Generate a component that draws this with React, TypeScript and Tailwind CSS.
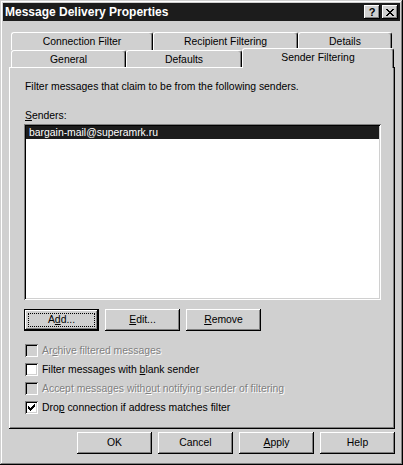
import React from "react";

const raised =
  "shadow-[inset_-1px_-1px_0_#000,inset_1px_1px_0_#fff,inset_-2px_-2px_0_#808080]";
const focused =
  "shadow-[inset_0_0_0_1px_#000,inset_-2px_-2px_0_#000,inset_2px_2px_0_#fff,inset_-3px_-3px_0_#808080]";

function Btn({ children, focus }: { children: React.ReactNode; focus?: boolean }) {
  return (
    <div
      className={`relative flex h-[22px] w-[75px] items-center justify-center bg-[#d0d0d0] text-black ${
        focus ? focused : raised
      }`}
    >
      {focus && <div className="absolute inset-[4px] border border-dotted border-black" />}
      <span className="leading-none">{children}</span>
    </div>
  );
}

function Tab({
  label,
  w,
  h,
  selected,
}: {
  label: string;
  w: string;
  h: string;
  selected?: boolean;
}) {
  return (
    <div
      className={`${w} ${h} flex shrink-0 justify-center rounded-t-[3px] border-l border-t border-r border-l-white border-t-white border-r-black bg-[#d0d0d0] shadow-[inset_-1px_0_0_#808080] ${
        selected ? "relative z-10 -mb-[1px] pt-[2px]" : "pt-[2px]"
      }`}
    >
      <span className="leading-[13px]">{label}</span>
    </div>
  );
}

function Check({ checked, disabled }: { checked?: boolean; disabled?: boolean }) {
  return (
    <div
      className={`relative h-[13px] w-[13px] shrink-0 ${
        disabled ? "bg-[#d0d0d0]" : "bg-white"
      } shadow-[inset_1px_1px_0_#808080,inset_-1px_-1px_0_#fff,inset_2px_2px_0_#000,inset_-2px_-2px_0_#d0d0d0]`}
    >
      {checked && (
        <svg width="13" height="13" viewBox="0 0 13 13" className="absolute left-0 top-0" shapeRendering="crispEdges">
          <rect x="3" y="5" width="1" height="3" fill="#000" />
          <rect x="4" y="6" width="1" height="3" fill="#000" />
          <rect x="5" y="7" width="1" height="3" fill="#000" />
          <rect x="6" y="6" width="1" height="3" fill="#000" />
          <rect x="7" y="5" width="1" height="3" fill="#000" />
          <rect x="8" y="4" width="1" height="3" fill="#000" />
          <rect x="9" y="3" width="1" height="3" fill="#000" />
        </svg>
      )}
    </div>
  );
}

function CheckRow({
  children,
  checked,
  disabled,
}: {
  children: React.ReactNode;
  checked?: boolean;
  disabled?: boolean;
}) {
  return (
    <div className="flex h-[19px] items-center gap-[4px] pl-[1px]">
      <Check checked={checked} disabled={disabled} />
      <span
        className={
          disabled
            ? "whitespace-nowrap text-[#808080] [text-shadow:1px_1px_0_#fff]"
            : "whitespace-nowrap text-black"
        }
      >
        {children}
      </span>
    </div>
  );
}

export default function App() {
  return (
    <div className="h-[465px] w-[403px] overflow-hidden bg-[#d0d0d0] font-['Liberation_Sans',Arial,sans-serif] text-[10.4px] text-black shadow-[inset_-1px_-1px_0_#000,inset_1px_1px_0_#d0d0d0,inset_-2px_-2px_0_#808080,inset_2px_2px_0_#fff]">
      {/* Title bar */}
      <div className="mx-[3px] mt-[3px] flex h-[18px] items-center justify-between bg-[#1c1c1c] pl-[2px] pr-[2px]">
        <span className="text-[12px] font-bold leading-none text-white">Message Delivery Properties</span>
        <div className="flex gap-[2px]">
          <div className={`flex h-[14px] w-[16px] items-center justify-center bg-[#d0d0d0] ${raised}`}>
            <span className="text-[11px] font-bold leading-none">?</span>
          </div>
          <div className={`flex h-[14px] w-[16px] items-center justify-center bg-[#d0d0d0] ${raised}`}>
            <svg width="8" height="7" viewBox="0 0 8 7" shapeRendering="crispEdges">
              <path d="M0 0h2v1h-2zM6 0h2v1h-2zM1 1h2v1h-2zM5 1h2v1h-2zM2 2h4v1h-4zM3 3h2v1h-2zM2 4h4v1h-4zM1 5h2v1h-2zM5 5h2v1h-2zM0 6h2v1h-2zM6 6h2v1h-2z" fill="#000" />
            </svg>
          </div>
        </div>
      </div>

      {/* Tabs row 1 */}
      <div className="mt-[11px] flex h-[16px] pl-[11px]">
        <Tab label="Connection Filter" w="w-[142px]" h="h-[18px]" />
        <Tab label="Recipient Filtering" w="w-[145px]" h="h-[18px]" />
        <Tab label="Details" w="w-[94px]" h="h-[18px]" />
      </div>
      {/* Tabs row 2 */}
      <div className="flex h-[19px] items-end pl-[11px]">
        <Tab label="General" w="w-[115px]" h="h-[17px]" />
        <Tab label="Defaults" w="w-[116px]" h="h-[17px]" />
        <Tab label="Sender Filtering" w="w-[152px]" h="h-[20px]" selected />
      </div>

      {/* Panel */}
      <div className="ml-[9px] h-[362px] w-[386px] pl-[15px] pt-[13px] shadow-[inset_-1px_-1px_0_#000,inset_1px_1px_0_#fff,inset_-2px_-2px_0_#808080]">
        <div className="pl-[1px] leading-[13px]">Filter messages that claim to be from the following senders.</div>
        <div className="mt-[16px] pl-[1px] leading-[13px]">
          <span className="underline">S</span>enders:
        </div>
        <div className="mt-[2px] h-[176px] w-[357px] bg-white p-[2px] shadow-[inset_1px_1px_0_#808080,inset_-1px_-1px_0_#fff,inset_2px_2px_0_#000,inset_-2px_-2px_0_#d0d0d0]">
          <div className="flex h-[13px] items-center bg-[#1c1c1c] pl-[3px] leading-[13px] text-white">
            bargain-mail@superamrk.ru
          </div>
        </div>
        <div className="mt-[9px] flex gap-[6px]">
          <Btn focus>
            A<span className="underline">d</span>d...
          </Btn>
          <Btn>
            <span className="underline">E</span>dit...
          </Btn>
          <Btn>
            <span className="underline">R</span>emove
          </Btn>
        </div>
        <div className="mt-[10px] flex flex-col">
          <CheckRow disabled>
            Ar<span className="underline">c</span>hive filtered messages
          </CheckRow>
          <CheckRow>
            Filter messages with <span className="underline">b</span>lank sender
          </CheckRow>
          <CheckRow disabled>
            Accept messages with<span className="underline">o</span>ut notifying sender of filtering
          </CheckRow>
          <CheckRow checked>
            Dro<span className="underline">p</span> connection if address matches filter
          </CheckRow>
        </div>
      </div>

      {/* Bottom buttons */}
      <div className="mt-[3px] flex justify-end gap-[6px] pr-[8px]">
        <Btn>OK</Btn>
        <Btn>Cancel</Btn>
        <Btn>
          <span className="underline">A</span>pply
        </Btn>
        <Btn>Help</Btn>
      </div>
    </div>
  );
}
